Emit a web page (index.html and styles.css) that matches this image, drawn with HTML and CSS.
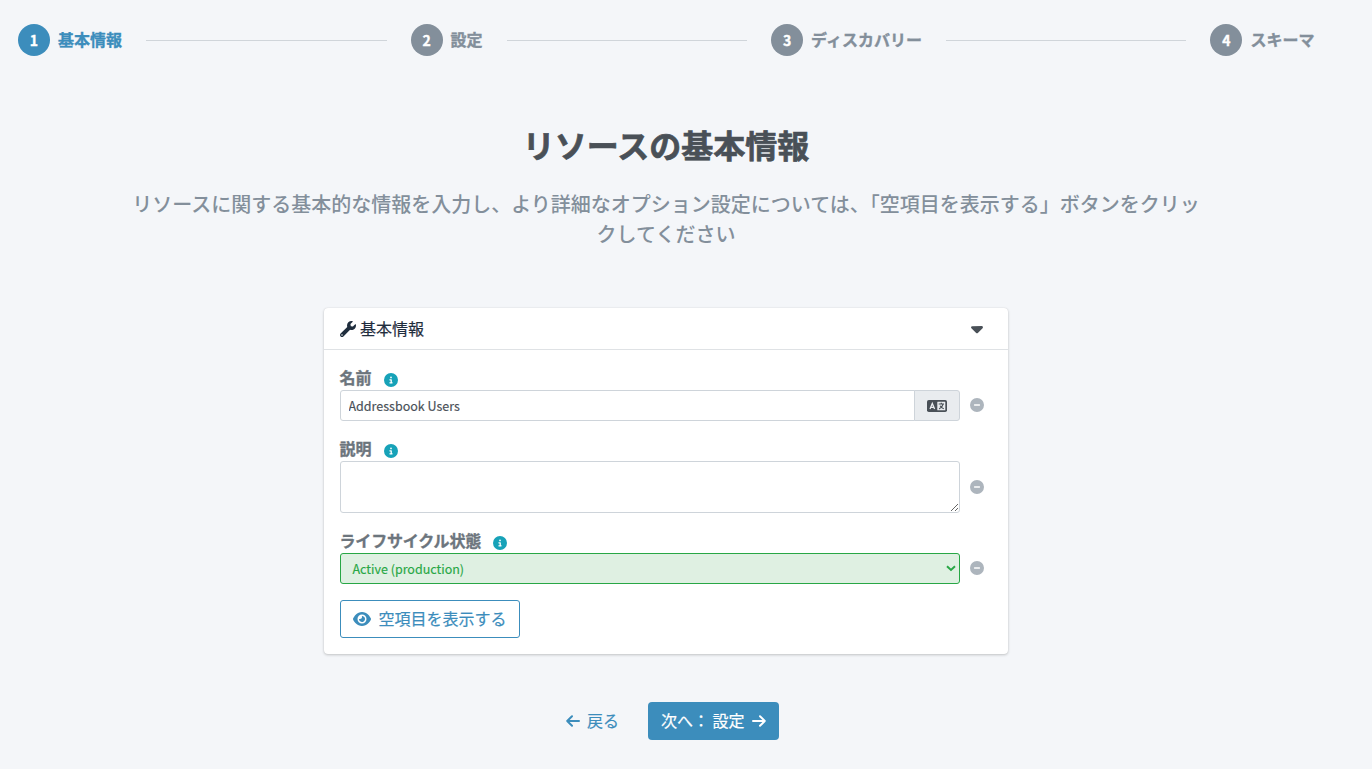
FILE: index.html
```html
<!DOCTYPE html>
<html lang="ja">
<head>
<meta charset="utf-8">
<title>リソースの基本情報</title>
<link rel="stylesheet" href="styles.css">
</head>
<body>
<svg class="sprite" aria-hidden="true">
  <symbol id="info" viewBox="0 0 512 512"><path d="M256 512A256 256 0 1 0 256 0a256 256 0 1 0 0 512zM216 336l24 0 0-64-24 0c-13.3 0-24-10.7-24-24s10.7-24 24-24l48 0c13.3 0 24 10.7 24 24l0 88 8 0c13.3 0 24 10.7 24 24s-10.7 24-24 24l-80 0c-13.3 0-24-10.7-24-24s10.7-24 24-24zm40-208a32 32 0 1 1 0 64 32 32 0 1 1 0-64z"/></symbol>
  <symbol id="minus" viewBox="0 0 512 512"><path d="M256 512A256 256 0 1 0 256 0a256 256 0 1 0 0 512zM168 228l176 0c15 0 28 12 28 28s-12 28-28 28l-176 0c-15 0-28-12-28-28s12-28 28-28z"/></symbol>
</svg>
<main class="page">
  <nav class="stepper">
    <div class="step step-active"><span class="step-number">1</span><span class="step-label">基本情報</span></div>
    <div class="step-line"></div>
    <div class="step"><span class="step-number">2</span><span class="step-label">設定</span></div>
    <div class="step-line"></div>
    <div class="step"><span class="step-number">3</span><span class="step-label">ディスカバリー</span></div>
    <div class="step-line"></div>
    <div class="step"><span class="step-number">4</span><span class="step-label">スキーマ</span></div>
  </nav>
  <h1 class="title">リソースの基本情報</h1>
  <p class="subtitle">リソースに関する基本的な情報を入力し、より詳細なオプション設定については、「空項目を表示する」ボタンをクリックしてください</p>

  <section class="card">
    <header class="card-header">
      <svg class="icon-wrench" viewBox="0 0 512 512"><path fill-rule="evenodd" d="M507.73 109.1c-2.24-9.03-13.54-12.09-20.12-5.51l-74.36 74.36-67.88-11.31-11.31-67.88 74.36-74.36c6.62-6.62 3.43-17.9-5.66-20.16-47.38-11.74-99.55.91-136.58 37.93-39.64 39.64-50.55 97.1-34.05 147.2L18.74 402.76c-24.99 24.99-24.99 65.51 0 90.5 24.99 24.99 65.51 24.99 90.5 0l213.21-213.21c50.12 16.71 107.47 5.68 147.37-34.22 37.07-37.07 49.7-89.32 37.91-136.73zM64 472a24 24 0 1 1 0-48 24 24 0 0 1 0 48z"/></svg>
      <span class="card-title">基本情報</span>
      <svg class="icon-caret" viewBox="0 0 320 512"><path d="M137.4 374.6c12.5 12.5 32.8 12.5 45.3 0l128-128c9.2-9.2 11.9-22.9 6.9-34.9s-16.6-19.8-29.6-19.8L32 192c-12.9 0-24.6 7.8-29.6 19.8s-2.2 25.7 6.9 34.9l128 128z"/></svg>
    </header>
    <div class="card-body">
      <div class="field">
        <label class="field-label"><span class="label-text">名前</span><svg class="icon-info"><use href="#info"/></svg></label>
        <div class="field-row">
          <div class="input-group">
            <input class="text-input" type="text" value="Addressbook Users">
            <span class="addon">
              <svg class="icon-language" viewBox="0 0 20 12"><rect class="lang-box" width="20" height="12" rx="1.800"/><rect class="lang-pane" x="10.300" y="1.700" width="8" height="8.600" rx=".4"/><path class="lang-a" d="M3 8.900 5.300 3.500 7.600 8.900M3.900 7.300h2.800"/><path class="lang-b" d="M11.700 4h5.300M14.300 2.700V4M16.100 4.200c-.5 2.100-2 3.800-4 4.700M13.100 5.700c.8 1.400 2 2.500 3.700 3.100"/></svg>
            </span>
          </div>
          <svg class="icon-minus"><use href="#minus"/></svg>
        </div>
      </div>
      <div class="field">
        <label class="field-label"><span class="label-text">説明</span><svg class="icon-info"><use href="#info"/></svg></label>
        <div class="field-row">
          <textarea class="textarea"></textarea>
          <svg class="icon-minus icon-minus-low"><use href="#minus"/></svg>
        </div>
      </div>
      <div class="field">
        <label class="field-label"><span class="label-text label-kana">ライフサイクル状態</span><svg class="icon-info"><use href="#info"/></svg></label>
        <div class="field-row">
          <div class="select"><span>Active (production)</span><svg class="icon-chevron" viewBox="0 0 10 7"><path d="M1 1.300 5 5l4-3.700"/></svg></div>
          <svg class="icon-minus"><use href="#minus"/></svg>
        </div>
      </div>
      <button class="button button-outline" type="button"><svg class="icon-eye" viewBox="0 0 576 512"><path d="M288 32c-80.8 0-145.5 36.8-192.6 80.6C48.6 156 17.3 208 2.5 243.7c-3.3 7.9-3.3 16.7 0 24.6C17.3 304 48.6 356 95.4 399.4C142.5 443.2 207.2 480 288 480s145.5-36.8 192.6-80.6c46.8-43.5 78.1-95.4 93-131.1c3.3-7.9 3.3-16.7 0-24.6c-14.9-35.7-46.2-87.7-93-131.1C433.5 68.8 368.8 32 288 32zM144 256a144 144 0 1 1 288 0 144 144 0 1 1 -288 0zm144-64c0 35.3-28.7 64-64 64c-7.1 0-13.9-1.2-20.3-3.3c-5.5-1.8-11.9 1.6-11.7 7.4c.3 6.9 1.3 13.8 3.2 20.7c13.7 51.2 66.4 81.6 117.6 67.9s81.6-66.4 67.9-117.6c-11.1-41.5-47.8-69.4-88.6-71.1c-5.8-.2-9.2 6.1-7.4 11.7c2.1 6.4 3.3 13.2 3.3 20.3z"/></svg><span class="button-text">空項目を表示する</span></button>
    </div>
  </section>

  <footer class="actions">
    <button class="button button-link" type="button"><svg class="icon-arrow" viewBox="0 0 14 12"><path d="M13 6H1.200M6 1.200 1.200 6 6 10.800"/></svg><span class="button-text">戻る</span></button>
    <button class="button button-primary" type="button"><span class="button-text">次へ： 設定</span><svg class="icon-arrow" viewBox="0 0 14 12"><path d="M1 6h11.800M8 1.200 12.800 6 8 10.800"/></svg></button>
  </footer>
</main>
</body>
</html>
```
FILE: styles.css
```css
* { box-sizing: border-box; }
body {
  margin: 0;
  background: #f4f6f9;
  color: #495057;
  font: 400 16px/24px "Noto Sans CJK JP", sans-serif;
}
svg { display: block; flex: none; fill: currentColor; }
.sprite { position: absolute; width: 0; height: 0; }
.page { width: 1332px; height: 769px; overflow: hidden; }

.stepper { display: flex; align-items: center; padding: 24px 17.5px 24px 18px; gap: 24px; }
.step { display: flex; align-items: center; gap: 8px; color: #838f9b; font-weight: 700; white-space: nowrap; }
.step-label { padding-bottom: 2px; -webkit-text-stroke: .35px currentColor; }
.step-active { color: #3c8dbc; }
.step-number {
  width: 32px; height: 32px; border-radius: 50%;
  background: #838f9b; color: #fff;
  font-size: 14px; line-height: 33px; text-align: center;
  -webkit-text-stroke: .35px currentColor;
}
.step-active .step-number { background: #3c8dbc; }
.step-line { flex: 1; height: 1px; background: #d0d5da; }

.title { margin: 43px 0 0; font-size: 32px; line-height: 42px; font-weight: 700; text-align: center; -webkit-text-stroke: .7px currentColor; }
.subtitle { width: 1080px; margin: 24px auto 0; color: #838f9b; font-size: 20px; line-height: 30px; font-weight: 500; text-align: center; }

.card {
  width: 684px; height: 346px; margin: 59px auto 0;
  background: #fff; border-radius: 4px;
  box-shadow: 0 0 1px rgba(0,0,0,.13), 0 1px 3px rgba(0,0,0,.2);
}
.card-header { display: flex; align-items: center; height: 42px; padding: 0 25px 0 16px; gap: 4px; border-bottom: 1px solid #dfe2e5; color: #1f2d3d; }
.card-title { padding-bottom: 2px; -webkit-text-stroke: .2px currentColor; }
.icon-wrench { width: 16px; height: 16px; }
.icon-caret { width: 12px; height: 19px; margin-left: auto; color: #495057; }
.card-body { padding: 16px; }
.field { margin-bottom: 16px; }
.field-label { display: flex; align-items: center; height: 24px; gap: 12px; color: #6c757d; font-weight: 700; }
.label-text { padding-bottom: 2px; margin-left: -.5px; -webkit-text-stroke: .35px currentColor; }
.label-kana { letter-spacing: -.18px; }
.icon-info { width: 14px; height: 14px; margin-top: 4px; color: #17a2b8; }
.field-row { display: flex; align-items: center; gap: 9.5px; }
.icon-minus { width: 14px; height: 14px; margin-bottom: 2px; color: #adb5bd; }
.icon-minus-low { margin-bottom: 0; }
.input-group { display: flex; width: 620px; height: 31px; }
.text-input {
  flex: 1; min-width: 0; padding: 1px 7.5px 0; border: 1px solid #ced4da; border-radius: 3px 0 0 3px;
  background: #fff; color: #495057; font: 400 12.5px/20px "Noto Sans CJK JP", sans-serif;
  -webkit-text-stroke: .15px currentColor;
}
.addon { display: grid; place-items: center; width: 46px; margin-left: -1px; border: 1px solid #ced4da; border-radius: 0 3px 3px 0; background: #e9ecef; color: #495057; }
.icon-language { width: 20px; height: 12px; }
.lang-pane { fill: #e9ecef; }
.lang-a { fill: none; stroke: #e9ecef; stroke-width: 1.3; }
.lang-b { fill: none; stroke: #495057; stroke-width: 1.2; }
.textarea { display: block; width: 620px; height: 52px; border: 1px solid #ced4da; border-radius: 3px; background: #fff; resize: vertical; }
.select {
  display: flex; align-items: center; justify-content: space-between;
  width: 620px; height: 31px; padding: 0 3px 0 11.5px;
  border: 1px solid #28a745; border-radius: 3px;
  background: #dff0e2; color: #28a745; font-size: 12.5px;
  -webkit-text-stroke: .15px currentColor;
}
.icon-chevron { width: 10px; height: 7px; fill: none; stroke: #28a745; stroke-width: 2; }

.button {
  display: flex; align-items: center; height: 38px; padding: 0 12px; gap: 8px;
  border: 1px solid transparent; border-radius: 4px; background: transparent;
  font: 400 16px/24px "Noto Sans CJK JP", sans-serif; white-space: nowrap;
}
.button-text { padding-bottom: 2px; -webkit-text-stroke: .2px currentColor; }
.button-outline { width: 180px; padding-left: 11.5px; border-color: #3c8dbc; border-radius: 3px; background: #fff; color: #3c8dbc; }
.icon-eye { width: 18px; height: 16px; }
.actions { display: flex; justify-content: center; gap: 16px; margin-top: 48px; }
.button-link { color: #3c8dbc; gap: 7px; }
.button-primary { width: 131px; background: #3c8dbc; color: #fff; gap: 7px; }
.icon-arrow { width: 14px; height: 12px; fill: none; stroke: currentColor; stroke-width: 2; stroke-linecap: round; stroke-linejoin: round; }
```
